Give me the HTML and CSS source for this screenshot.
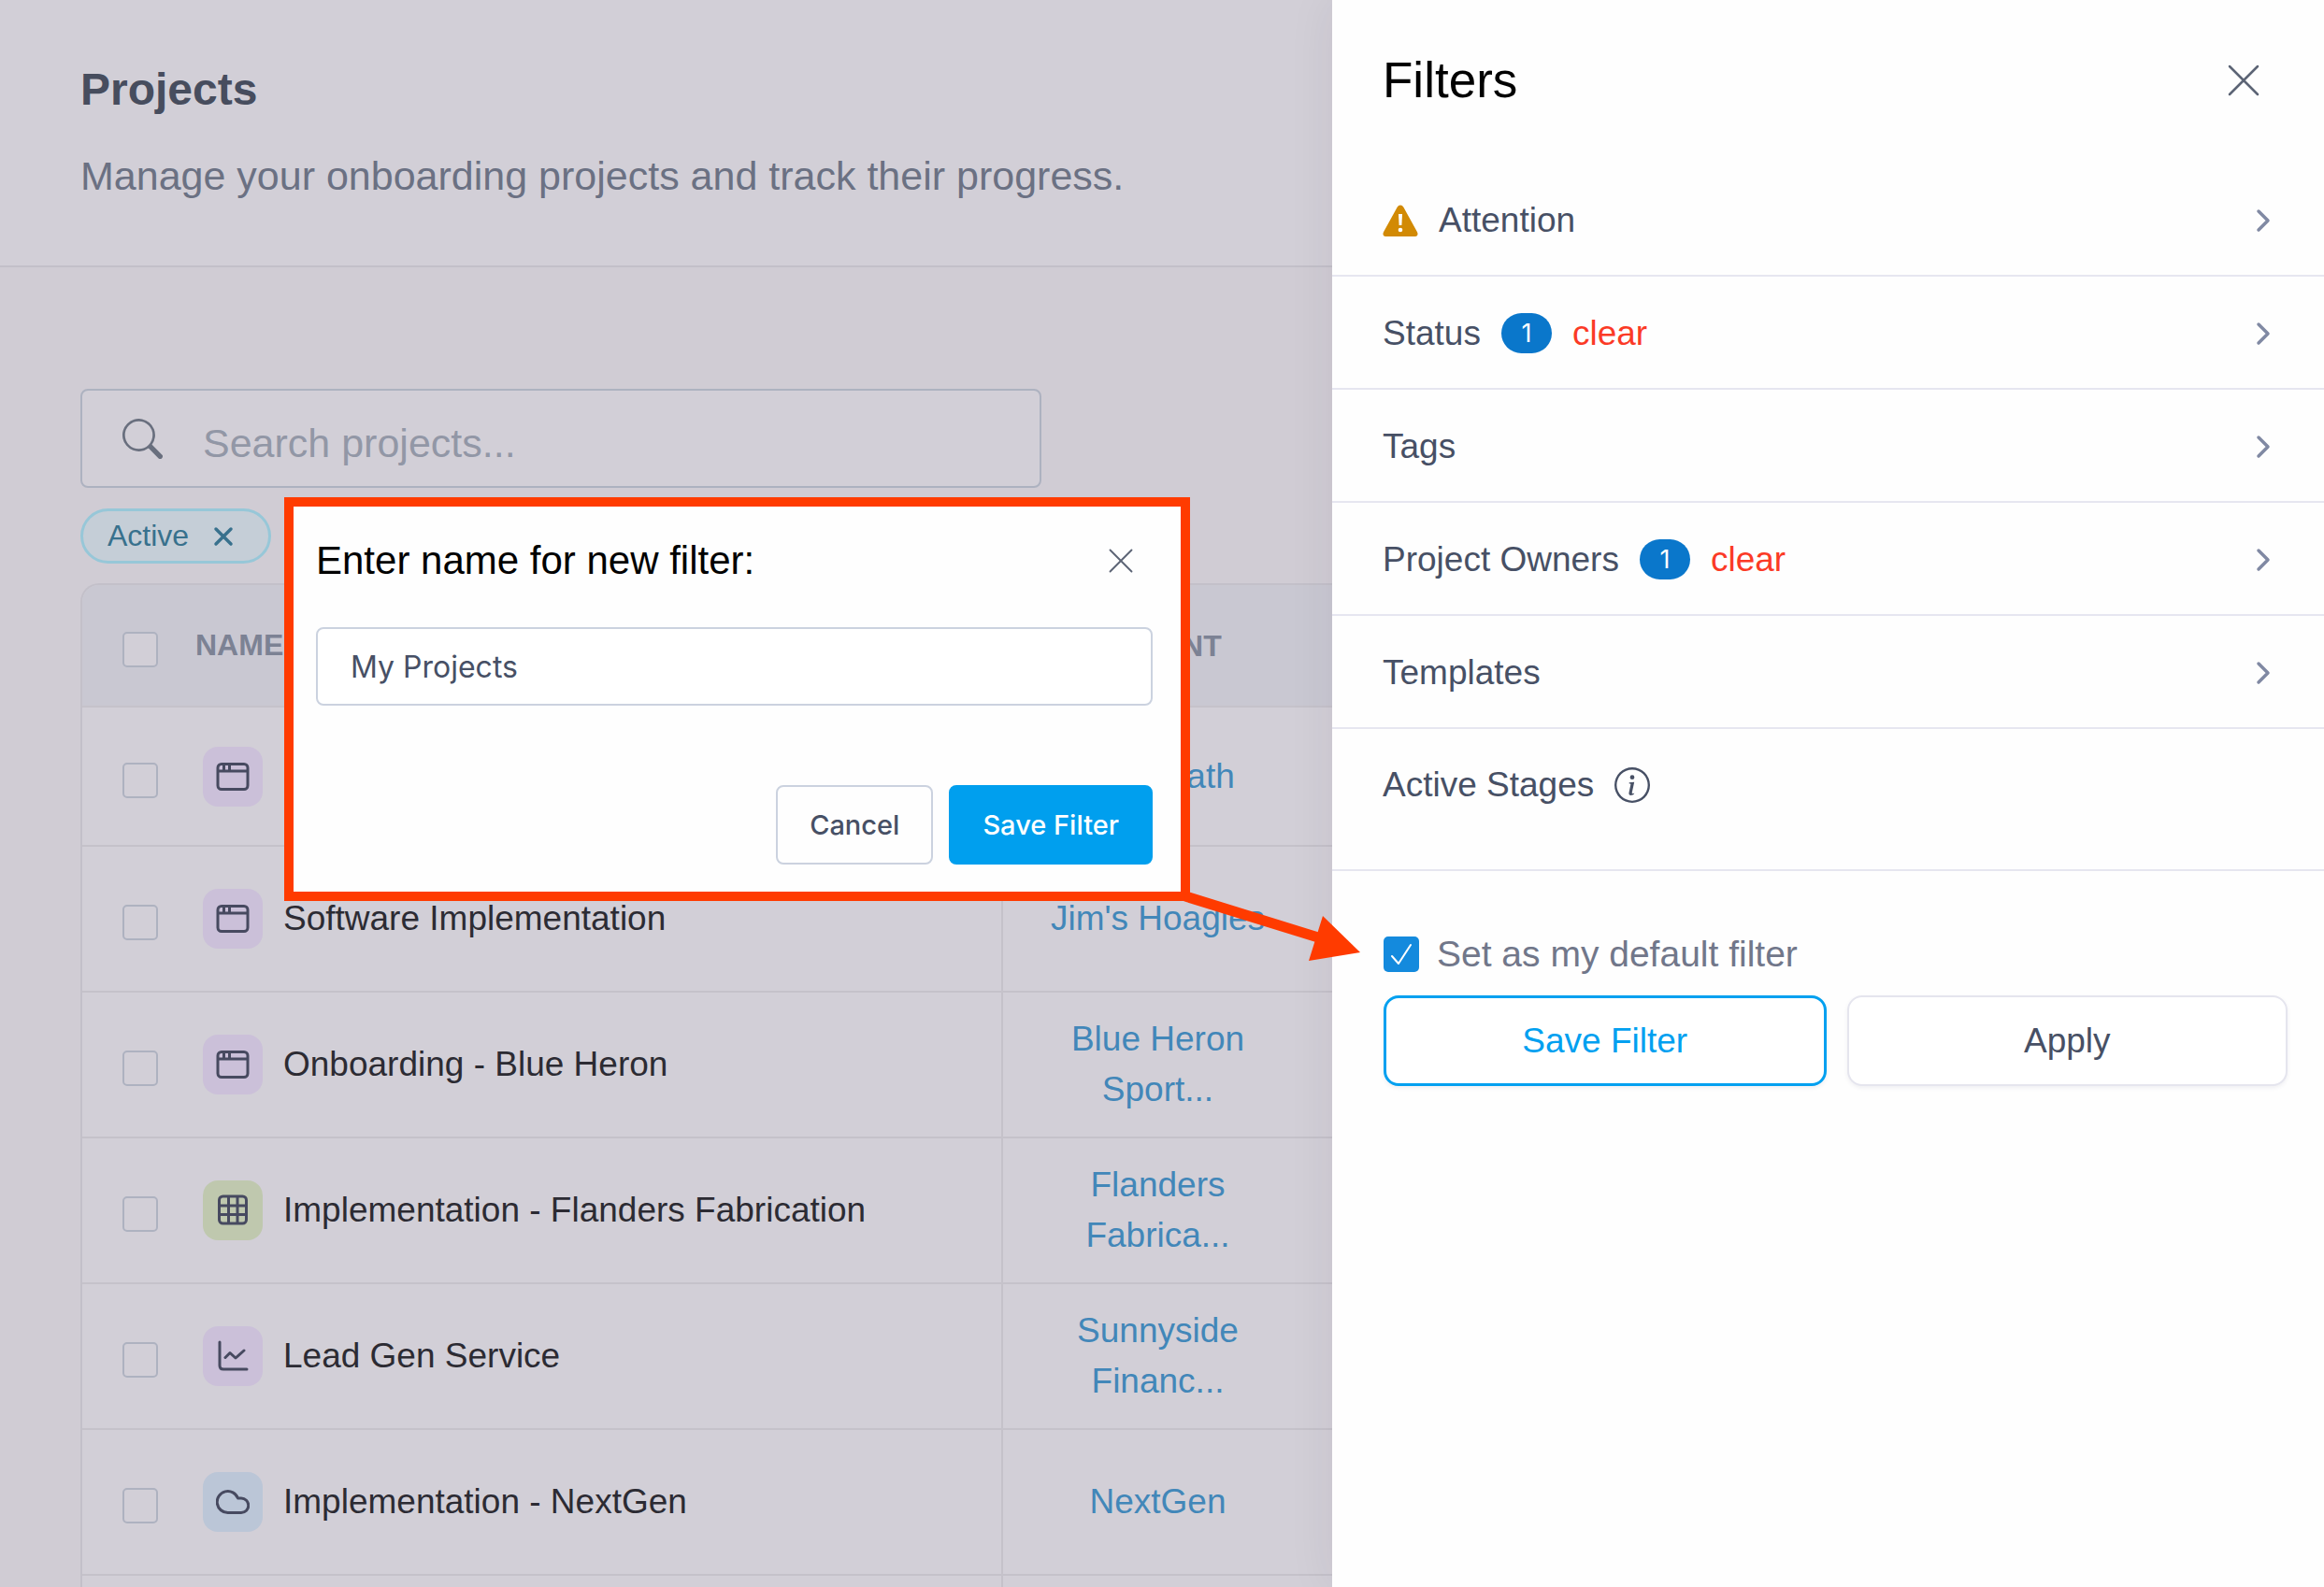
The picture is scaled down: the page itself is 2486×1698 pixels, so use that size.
FILE: index.html
```html
<!DOCTYPE html>
<html lang="en">
<head>
<meta charset="utf-8">
<title>Projects</title>
<meta name="viewport" content="width=device-width, initial-scale=1">
<link rel="stylesheet" href="styles.css">
</head>
<body>
<svg class="sprite" aria-hidden="true">
  <symbol id="i-window" viewBox="0 0 36 36" fill="none" stroke="currentColor" stroke-width="3"><rect x="2" y="4.500" width="32" height="27" rx="4"/><path d="M2 12h32M8.500 5v7M14.500 5v7"/></symbol>
  <symbol id="i-grid" viewBox="0 0 36 36" fill="none" stroke="currentColor" stroke-width="3"><rect x="3.500" y="3" width="29" height="29" rx="4"/><path d="M3.500 13h29M3.500 22.500h29M13.500 3v29M23 3v29"/></symbol>
  <symbol id="i-chart" viewBox="0 0 36 36" fill="none" stroke="currentColor" stroke-width="3" stroke-linecap="round" stroke-linejoin="round"><path d="M4 3v25q0 4 4 4h25M10 19.500l5-5 6 5.500 9-8"/></symbol>
  <symbol id="i-cloud" viewBox="0 0 36 36" fill="none" stroke="currentColor" stroke-width="3" stroke-linejoin="round"><path d="M13 29.500a11.500 11.500 0 1 1 10.500-15.500h3.500a7.500 7.500 0 0 1 0 15.500z"/></symbol>
  <symbol id="i-chevron" viewBox="0 0 16 26" fill="none" stroke="currentColor" stroke-width="3.500" stroke-linecap="round" stroke-linejoin="round"><path d="M3 3l10 10L3 23"/></symbol>
  <symbol id="i-close" viewBox="0 0 34 34" fill="none" stroke="currentColor" stroke-width="2.500" stroke-linecap="round"><path d="M2 2l30 30M32 2L2 32"/></symbol>
</svg>

<div class="app">
  <main class="page">
    <header class="page-header">
      <h1 class="page-title">Projects</h1>
      <p class="page-subtitle">Manage your onboarding projects and track their progress.</p>
    </header>

    <section class="content">
      <label class="search">
        <svg class="search-icon" viewBox="0 0 16 16" fill="currentColor" aria-hidden="true"><path d="M11.742 10.344a6.500 6.500 0 1 0-1.397 1.398h-.001c.03.04.062.078.098.115l3.850 3.850a1 1 0 0 0 1.415-1.414l-3.850-3.850a1.007 1.007 0 0 0-.115-.1zM12 6.500a5.500 5.500 0 1 1-11 0 5.500 5.500 0 0 1 11 0z"/></svg>
        <input class="search-input" type="text" placeholder="Search projects..." aria-label="Search projects">
      </label>

      <div class="chips">
        <button class="chip" type="button">Active
          <svg class="chip-x" viewBox="0 0 22 22" fill="none" stroke="currentColor" stroke-width="3.500" stroke-linecap="round" aria-hidden="true"><path d="M3 3l16 16M19 3L3 19"/></svg>
        </button>
      </div>

      <div class="table-wrap">
        <table class="projects">
          <thead>
            <tr>
              <th class="col-check"><input class="tick" type="checkbox" aria-label="Select all projects"></th>
              <th class="col-name">NAME</th>
              <th class="col-client">CLIENT</th>
            </tr>
          </thead>
          <tbody>
            <tr class="row-first">
              <td class="col-check"><input class="tick" type="checkbox" aria-label="Select project"></td>
              <td class="col-name"><div class="name"><span class="tile tile-purple"><svg class="tile-icon"><use href="#i-window"/></svg></span></div></td>
              <td class="col-client"><a class="client" href="#">GrowPath</a></td>
            </tr>
            <tr>
              <td class="col-check"><input class="tick" type="checkbox" aria-label="Select Software Implementation"></td>
              <td class="col-name"><div class="name"><span class="tile tile-purple"><svg class="tile-icon"><use href="#i-window"/></svg></span>Software Implementation</div></td>
              <td class="col-client"><a class="client" href="#">Jim's Hoagies</a></td>
            </tr>
            <tr>
              <td class="col-check"><input class="tick" type="checkbox" aria-label="Select Onboarding - Blue Heron"></td>
              <td class="col-name"><div class="name"><span class="tile tile-purple"><svg class="tile-icon"><use href="#i-window"/></svg></span>Onboarding - Blue Heron</div></td>
              <td class="col-client"><a class="client" href="#">Blue Heron<br>Sport...</a></td>
            </tr>
            <tr>
              <td class="col-check"><input class="tick" type="checkbox" aria-label="Select Implementation - Flanders Fabrication"></td>
              <td class="col-name"><div class="name"><span class="tile tile-green"><svg class="tile-icon"><use href="#i-grid"/></svg></span>Implementation - Flanders Fabrication</div></td>
              <td class="col-client"><a class="client" href="#">Flanders<br>Fabrica...</a></td>
            </tr>
            <tr>
              <td class="col-check"><input class="tick" type="checkbox" aria-label="Select Lead Gen Service"></td>
              <td class="col-name"><div class="name"><span class="tile tile-purple"><svg class="tile-icon"><use href="#i-chart"/></svg></span>Lead Gen Service</div></td>
              <td class="col-client"><a class="client" href="#">Sunnyside<br>Financ...</a></td>
            </tr>
            <tr>
              <td class="col-check"><input class="tick" type="checkbox" aria-label="Select Implementation - NextGen"></td>
              <td class="col-name"><div class="name"><span class="tile tile-blue"><svg class="tile-icon"><use href="#i-cloud"/></svg></span>Implementation - NextGen</div></td>
              <td class="col-client"><a class="client" href="#">NextGen</a></td>
            </tr>
            <tr>
              <td class="col-check"></td>
              <td class="col-name"></td>
              <td class="col-client"></td>
            </tr>
          </tbody>
        </table>
      </div>
    </section>
  </main>

  <aside class="drawer">
    <header class="drawer-header">
      <h2 class="drawer-title">Filters</h2>
      <button class="icon-button" type="button" aria-label="Close filters"><svg class="close-lg"><use href="#i-close"/></svg></button>
    </header>

    <ul class="filters">
      <li class="filter">
        <svg class="warn" viewBox="0 0 38 34" aria-hidden="true"><path d="M19 0.500q2.200 0 3.400 2.200l14.600 26.500q1 2 .3 3.200-.7 1.600-2.800 1.600h-31q-2.100 0-2.800-1.600-.7-1.200.3-3.200l14.600-26.500q1.200-2.200 3.400-2.200z" fill="#d28a04"/><path d="M17 10h4l-.6 12h-2.800z" fill="#fff"/><circle cx="19" cy="27" r="2.300" fill="#fff"/></svg>
        <span>Attention</span>
        <svg class="chevron"><use href="#i-chevron"/></svg>
      </li>
      <li class="filter">
        <span>Status</span><span class="badge">1</span><button class="clear" type="button">clear</button>
        <svg class="chevron"><use href="#i-chevron"/></svg>
      </li>
      <li class="filter">
        <span>Tags</span>
        <svg class="chevron"><use href="#i-chevron"/></svg>
      </li>
      <li class="filter">
        <span>Project Owners</span><span class="badge">1</span><button class="clear" type="button">clear</button>
        <svg class="chevron"><use href="#i-chevron"/></svg>
      </li>
      <li class="filter">
        <span>Templates</span>
        <svg class="chevron"><use href="#i-chevron"/></svg>
      </li>
      <li class="filter filter-stages">
        <span>Active Stages</span>
        <svg class="info" viewBox="0 0 16 16" fill="currentColor" aria-hidden="true"><path d="M8 15A7 7 0 1 1 8 1a7 7 0 0 1 0 14zm0 1A8 8 0 1 0 8 0a8 8 0 0 0 0 16z"/><path d="m8.930 6.588-2.290.287-.082.38.450.083c.294.070.352.176.288.469l-.738 3.468c-.194.897.105 1.319.808 1.319.545 0 1.178-.252 1.465-.598l.088-.416c-.2.176-.492.246-.686.246-.275 0-.375-.193-.304-.533L8.930 6.588zM9 4.500a1 1 0 1 1-2 0 1 1 0 0 1 2 0z"/></svg>
      </li>
    </ul>

    <footer class="drawer-footer">
      <label class="default"><input class="tick-default" type="checkbox" checked>Set as my default filter</label>
      <div class="drawer-actions">
        <button class="wide wide-save" type="button">Save Filter</button>
        <button class="wide" type="button">Apply</button>
      </div>
    </footer>
  </aside>

  <section class="modal" role="dialog" aria-labelledby="modal-title">
    <header class="modal-header">
      <label class="modal-title" id="modal-title" for="filter-name">Enter name for new filter:</label>
      <button class="icon-button" type="button" aria-label="Close dialog"><svg class="close-sm"><use href="#i-close"/></svg></button>
    </header>
    <input class="modal-input" id="filter-name" type="text" value="My Projects">
    <div class="modal-actions">
      <button class="btn" type="button">Cancel</button>
      <button class="btn btn-primary" type="button">Save Filter</button>
    </div>
  </section>

  <svg class="arrow" viewBox="0 0 200 90" aria-hidden="true"><path d="M10 15L152 59" stroke="#ff3b00" stroke-width="11"/><path d="M157 36L197 75L142 84z" fill="#ff3b00"/></svg>
</div>
</body>
</html>
```

FILE: styles.css
```css
* { box-sizing: border-box; }

body {
  margin: 0;
  font-family: "Liberation Sans", Arial, sans-serif;
  font-size: 37px;
  background: #d0ccd4;
  color: #475065;
}

h1, h2, p, ul { margin: 0; padding: 0; font-weight: 400; }
button, input { font: inherit; color: inherit; }
button { cursor: pointer; background: none; border: 0; padding: 0; }
svg { display: block; flex: none; }
.sprite { position: absolute; width: 0; height: 0; }

.app {
  position: relative;
  display: flex;
  height: 100vh;
  overflow: hidden;
}

/* Projects page, dimmed behind the drawer */
.page { flex: 1; min-width: 0; overflow: hidden; }

.page-header {
  padding: 66px 86px 66px;
  background: #d2cfd7;
  border-bottom: 2px solid #c3c0c9;
}
.page-title { font-size: 48px; line-height: 60px; font-weight: 700; color: #474d5e; }
.page-subtitle { margin-top: 32px; font-size: 43px; line-height: 60px; color: #6b7183; white-space: nowrap; }

.content { padding: 130px 0 0 86px; }

.search {
  display: flex;
  align-items: center;
  gap: 43px;
  width: 1028px;
  max-width: 100%;
  height: 106px;
  padding: 0 43px;
  background: #d2cfd7;
  border: 2px solid #adb2c0;
  border-radius: 8px;
}
.search-icon { width: 43px; height: 43px; color: #696f7e; }
.search-input {
  flex: 1;
  min-width: 0;
  padding: 10px 0 0;
  border: 0;
  outline: 0;
  background: none;
  font-size: 43px;
}
.search-input::placeholder { color: #9297a6; opacity: 1; }

.chips { display: flex; margin-top: 22px; }
.chip {
  display: flex;
  align-items: center;
  gap: 26px;
  height: 59px;
  padding: 0 37px 0 26px;
  border: 3px solid #97c7d8;
  border-radius: 30px;
  background: #c5ced7;
  color: #38718d;
  font-size: 32px;
}
.chip-x { width: 22px; height: 22px; }

.table-wrap {
  margin-top: 21px;
  border: 2px solid #c3c0c9;
  border-right: 0;
  border-radius: 20px 0 0 0;
  overflow: hidden;
  background: #d2cfd7;
}
.projects { width: 100%; border-collapse: separate; border-spacing: 0; table-layout: fixed; }
.projects th, .projects td { padding: 0; height: 156px; border-bottom: 2px solid #c5c2ca; }
.projects th { height: 131px; background: #c9c8d2; color: #7c8294; font-size: 32px; }
.projects .row-first td { height: 149px; }
.projects .col-check { width: 121px; padding: 8px 0 0 43px; text-align: left; }
.projects .col-name { width: 864px; padding-left: 8px; border-right: 2px solid #c5c2ca; text-align: left; }
.projects th.col-name { padding-left: 0; }
.projects .col-client { padding-right: 21px; text-align: center; line-height: 54px; }
.projects th.col-client { padding-right: 0; }

.name { display: flex; align-items: center; gap: 22px; color: #2c2b33; white-space: nowrap; }
.tile {
  display: flex;
  align-items: center;
  justify-content: center;
  width: 64px;
  height: 64px;
  border-radius: 16px;
  color: #474a60;
}
.tile-purple { background: #cbc0d9; }
.tile-green { background: #bfc8ae; }
.tile-blue { background: #bbc6d7; }
.tile-icon { width: 36px; height: 36px; }
.client { color: #4287b9; text-decoration: none; }

.tick, .tick-default {
  appearance: none;
  display: block;
  flex: none;
  width: 38px;
  height: 38px;
  margin: 0;
  border: 2px solid #aeb2c0;
  border-radius: 5px;
  background: #d2cfd7;
}

/* Filters drawer */
.drawer {
  width: 1061px;
  max-width: 50%;
  background: #fefefe;
  box-shadow: 0 0 48px rgba(40, 35, 60, .07);
}
.drawer-header {
  display: flex;
  align-items: center;
  justify-content: space-between;
  height: 175px;
  padding: 0 69px 3px 54px;
}
.drawer-title { font-size: 53px; line-height: 64px; color: #000; }
.icon-button { color: #5c6475; }
.close-lg { width: 34px; height: 34px; }
.close-sm { width: 26px; height: 26px; }

.filters { list-style: none; }
.filter {
  display: flex;
  align-items: center;
  height: 121px;
  padding: 2px 57px 0 54px;
  gap: 22px;
  border-bottom: 2px solid #e6e6f0;
}
.filter-stages { height: 152px; padding-bottom: 32px; }
.badge {
  width: 54px;
  height: 43px;
  border-radius: 22px;
  background: #0a77cb;
  color: #fff;
  font: 27px/43px Inter, sans-serif;
  text-align: center;
}
.clear { color: #fb3a26; }
.warn { width: 38px; height: 34px; }
.info { width: 38px; height: 38px; }
.chevron { width: 16px; height: 26px; margin-left: auto; color: #8089a3; }

.drawer-footer { padding: 66px 39px 0 55px; }
.default { display: flex; align-items: center; gap: 19px; height: 46px; font-size: 39px; color: #71778a; }
.tick-default {
  border: 0;
  border-radius: 5px;
  background: #148add url("data:image/svg+xml,%3Csvg xmlns='http://www.w3.org/2000/svg' viewBox='0 0 38 38'%3E%3Cpath d='M9 21l7 8L29 9' fill='none' stroke='white' stroke-width='2' stroke-linecap='round' stroke-linejoin='round'/%3E%3C/svg%3E") center / 100%;
}
.drawer-actions { display: flex; gap: 22px; margin-top: 21px; }
.wide {
  flex: 1;
  height: 97px;
  border: 2px solid #e5e5ee;
  border-radius: 16px;
  background: #fff;
  box-shadow: 0 2px 4px rgba(60, 60, 100, .08);
}
.wide-save { border: 3px solid #00a0f0; color: #00a0f0; }

/* New filter dialog */
.modal {
  position: absolute;
  left: 304px;
  top: 532px;
  width: 969px;
  padding: 30px 30px 29px 24px;
  border: 10px solid #ff3b00;
  background: #fefefe;
}
.modal-header { display: flex; align-items: center; justify-content: space-between; height: 56px; padding-right: 21px; }
.modal-title { font-size: 42px; color: #000; }
.modal-input {
  display: block;
  width: 100%;
  height: 84px;
  margin-top: 43px;
  padding: 0 35px;
  border: 2px solid #cbd2df;
  border-radius: 8px;
  background: #fff;
  font-family: Inter, sans-serif;
  font-size: 32px;
}
.modal-actions { display: flex; justify-content: flex-end; gap: 17px; margin-top: 85px; }
.btn {
  height: 85px;
  padding: 0 34px;
  border: 2px solid #cbd2df;
  border-radius: 8px;
  font: 500 29px Inter, sans-serif;
}
.btn-primary { border-color: #009fee; background: #009fee; color: #fff; }

/* Callout from the dialog to the default-filter box */
.arrow { position: absolute; left: 1258px; top: 944px; width: 200px; height: 90px; }
```
